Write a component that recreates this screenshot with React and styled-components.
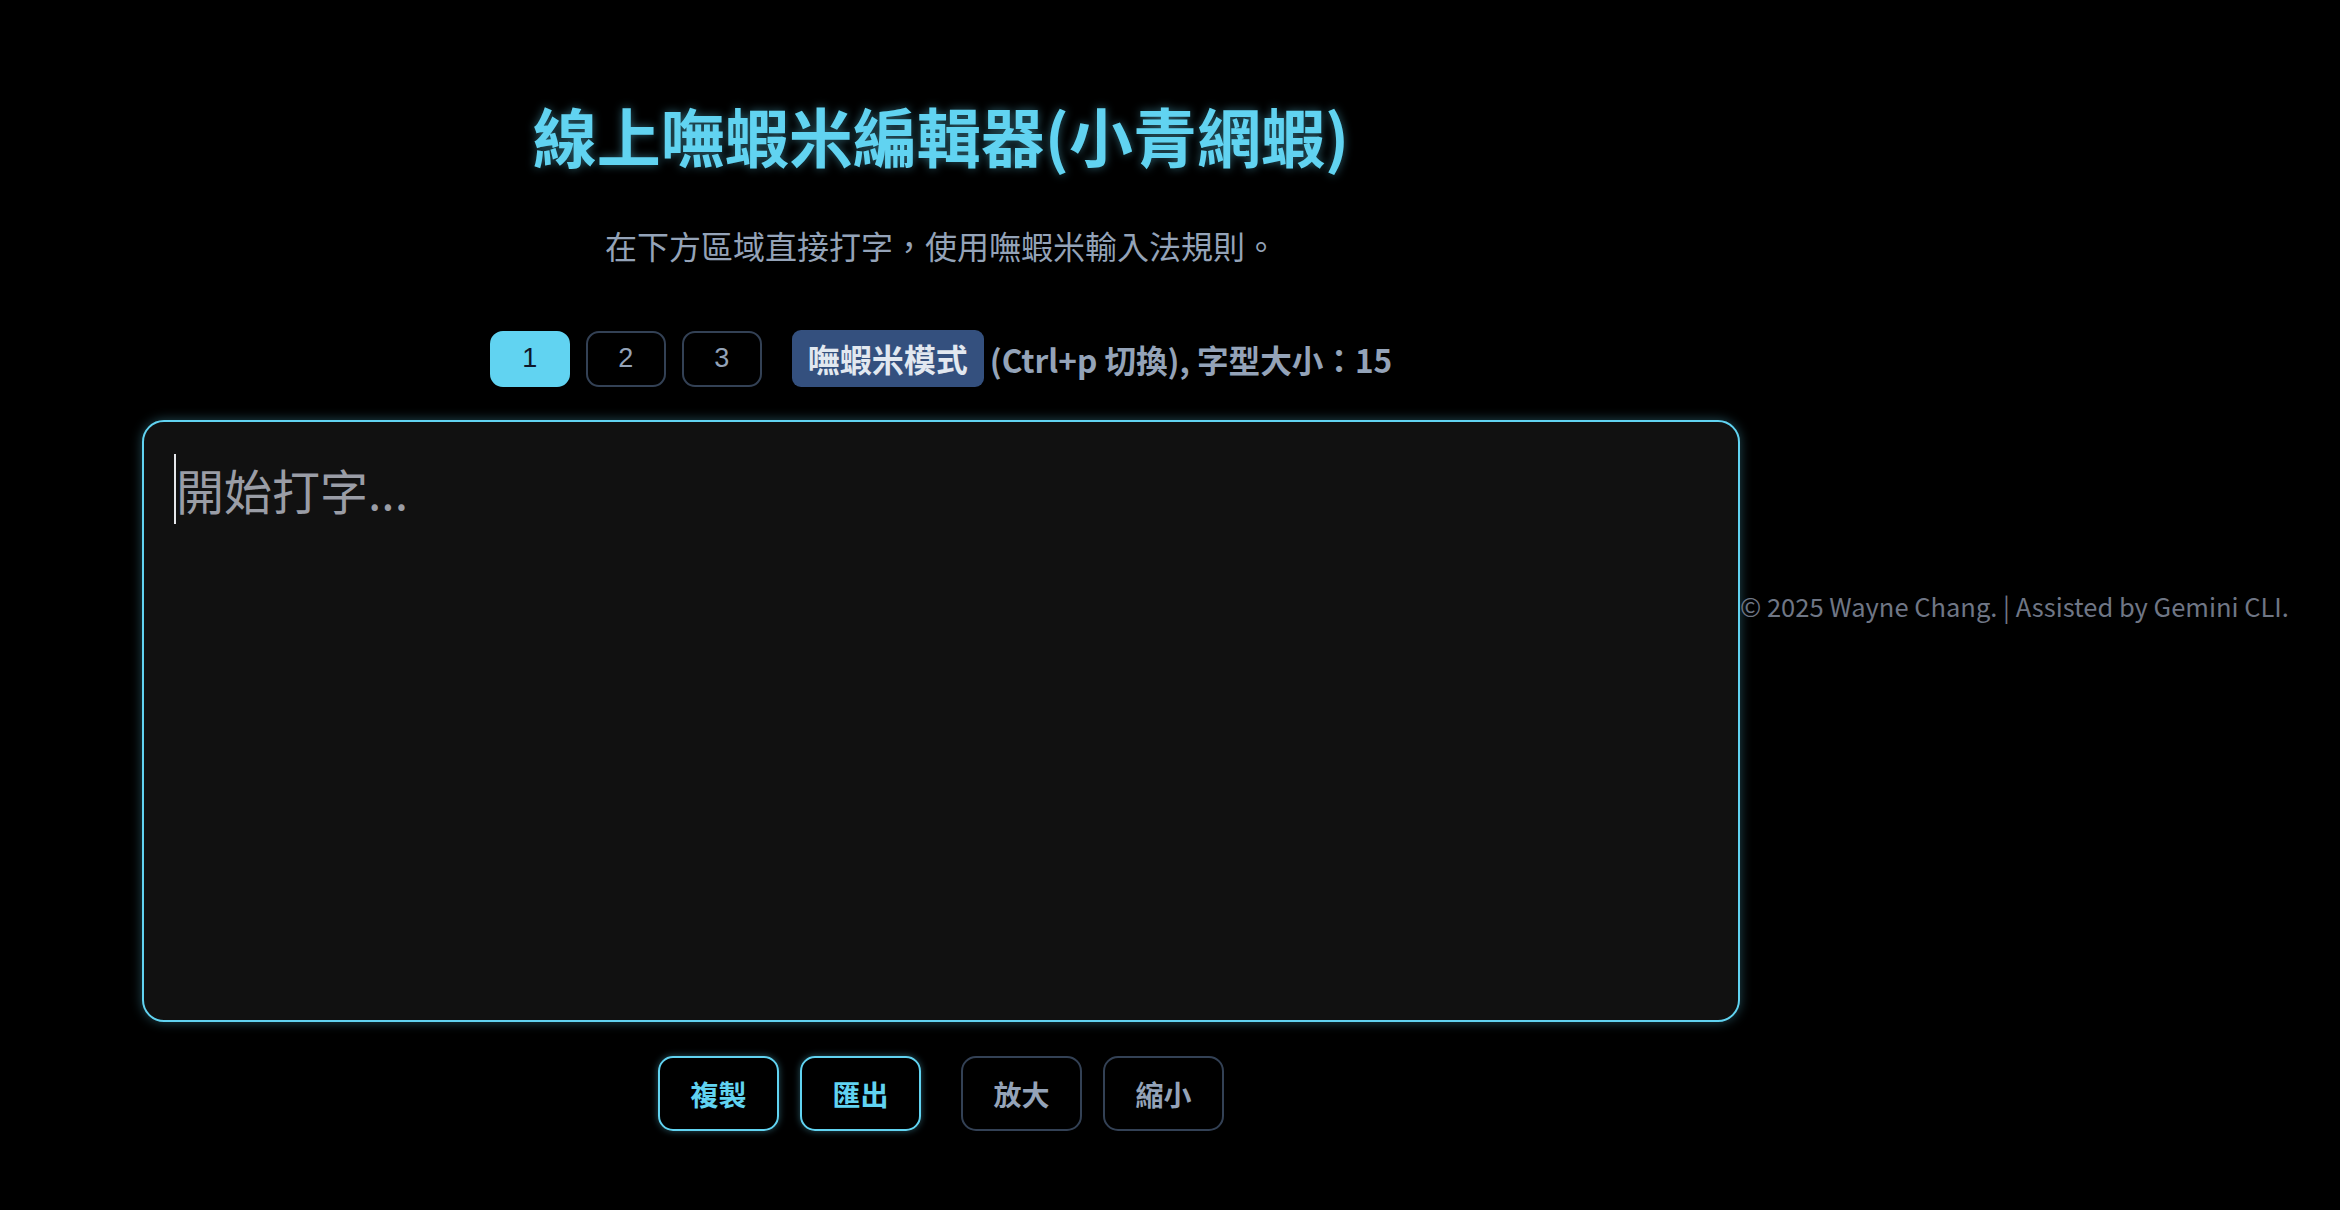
import React from 'react';
import styled, { createGlobalStyle } from 'styled-components';

const CYAN = '#61d3f1';

const GlobalStyle = createGlobalStyle`
  html, body {
    margin: 0;
    padding: 0;
    background: #000;
  }
  body {
    font-family: "Noto Sans CJK TC", "Noto Sans", sans-serif;
    color: #94a3b8;
  }
  * {
    box-sizing: border-box;
  }
`;

const Page = styled.div`
  display: flex;
  min-height: 100vh;
  padding-left: 142px;
`;

const Main = styled.main`
  width: 1598px;
  flex-shrink: 0;
  display: flex;
  flex-direction: column;
  align-items: center;
  padding-top: 96px;
`;

const Title = styled.h1`
  margin: 0;
  font-size: 64px;
  line-height: 76px;
  font-weight: 700;
  color: ${CYAN};
  text-shadow: 0 0 10px rgba(97, 211, 241, 0.45);
`;

const Subtitle = styled.p`
  margin: 49px 0 0;
  font-size: 32px;
  line-height: 48px;
  color: #94a3b8;
`;

const Toolbar = styled.div`
  margin-top: 61px;
  display: flex;
  align-items: center;
  gap: 16px;
`;

const PageButton = styled.button`
  width: 80px;
  height: 56px;
  border-radius: 13px;
  border: 2px solid ${(p) => (p.$active ? CYAN : '#334155')};
  background: ${(p) => (p.$active ? CYAN : 'transparent')};
  color: ${(p) => (p.$active ? '#0f172a' : '#94a3b8')};
  font-family: "Liberation Sans", Arial, sans-serif;
  font-size: 27px;
  padding: 0;
`;

const ModeInfo = styled.div`
  margin-left: 14px;
  display: flex;
  align-items: center;
  gap: 6px;
  font-size: 31.6px;
  font-weight: 700;
  color: #94a3b8;
`;

const ModeBadge = styled.span`
  display: inline-block;
  background: #34507e;
  color: #e2e8f0;
  font-size: 32px;
  border-radius: 9px;
  padding: 5px 16px;
  line-height: 47px;
`;

const Editor = styled.div`
  margin-top: 33px;
  width: 100%;
  height: 602px;
  background: #111;
  border: 2px solid ${CYAN};
  border-radius: 22px;
  box-shadow: 0 0 12px rgba(97, 211, 241, 0.35);
  padding: 32px 30px;
  font-size: 48px;
  line-height: 70px;
  color: #9a9da6;
`;

const Caret = styled.span`
  display: inline-block;
  width: 2px;
  height: 70px;
  background: #e5e7eb;
  vertical-align: top;
`;

const Actions = styled.div`
  margin-top: 34px;
  display: flex;
  gap: 40px;
`;

const Group = styled.div`
  display: flex;
  gap: 21px;
`;

const ActionButton = styled.button`
  width: 121px;
  height: 75px;
  border-radius: 15px;
  background: transparent;
  font-family: "Noto Sans CJK TC", sans-serif;
  font-size: 28px;
  font-weight: 700;
  border: 2px solid ${(p) => (p.$primary ? CYAN : '#334155')};
  color: ${(p) => (p.$primary ? CYAN : '#94a3b8')};
  box-shadow: ${(p) => (p.$primary ? '0 0 7px rgba(97, 211, 241, 0.4)' : 'none')};
  padding: 0;
`;

const Footer = styled.footer`
  align-self: center;
  white-space: nowrap;
  font-size: 25.5px;
  color: #6f7685;
`;

export default function App() {
  return (
    <>
      <GlobalStyle />
      <Page>
        <Main>
          <Title>線上嘸蝦米編輯器(小青網蝦)</Title>
          <Subtitle>在下方區域直接打字，使用嘸蝦米輸入法規則。</Subtitle>
          <Toolbar>
            <PageButton $active>1</PageButton>
            <PageButton>2</PageButton>
            <PageButton>3</PageButton>
            <ModeInfo>
              <ModeBadge>嘸蝦米模式</ModeBadge>
              <span>(Ctrl+p 切換), 字型大小：15</span>
            </ModeInfo>
          </Toolbar>
          <Editor>
            <Caret />
            開始打字...
          </Editor>
          <Actions>
            <Group>
              <ActionButton $primary>複製</ActionButton>
              <ActionButton $primary>匯出</ActionButton>
            </Group>
            <Group>
              <ActionButton>放大</ActionButton>
              <ActionButton>縮小</ActionButton>
            </Group>
          </Actions>
        </Main>
        <Footer>© 2025 Wayne Chang. | Assisted by Gemini CLI.</Footer>
      </Page>
    </>
  );
}
